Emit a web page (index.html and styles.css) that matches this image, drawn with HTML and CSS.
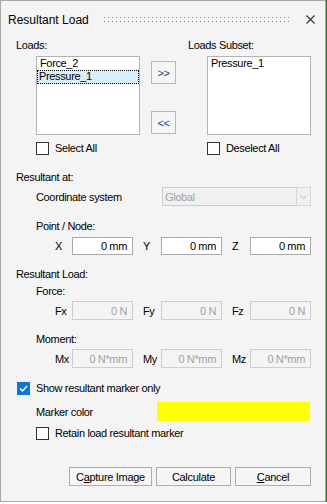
FILE: index.html
```html
<!DOCTYPE html>
<html>
<head>
<meta charset="utf-8">
<link rel="stylesheet" href="styles.css">
</head>
<body>
<div class="window">
  <div class="titlebar">
    <span class="title">Resultant Load</span>
    <svg class="grip" width="188" height="5" viewBox="0 0 188 5">
      <defs><pattern id="dots" width="4" height="4" patternUnits="userSpaceOnUse"><rect width="1" height="1" fill="#8c8c8c"/></pattern></defs>
      <rect width="188" height="5" fill="url(#dots)"/>
    </svg>
    <svg class="close" width="9" height="9" viewBox="0 0 9 9">
      <path d="M0.5 0.5 L8.5 8.5 M8.5 0.5 L0.5 8.5" stroke="#333" stroke-width="1.1" fill="none"/>
    </svg>
  </div>

  <div class="loads">
    <div class="col col-left">
      <div class="lbl">Loads:</div>
      <div class="listbox">
        <div class="item">Force_2</div>
        <div class="item selected">Pressure_1</div>
      </div>
      <div class="check-row">
        <span class="checkbox"></span><span>Select All</span>
      </div>
    </div>
    <div class="col col-mid">
      <div class="btn small btn-add">&gt;&gt;</div>
      <div class="btn small btn-remove">&lt;&lt;</div>
    </div>
    <div class="col col-right">
      <div class="lbl">Loads Subset:</div>
      <div class="listbox">
        <div class="item">Pressure_1</div>
      </div>
      <div class="check-row">
        <span class="checkbox"></span><span>Deselect All</span>
      </div>
    </div>
  </div>

  <div class="lbl row-label sec-resultant">Resultant at:</div>
  <div class="row-coord">
    <span class="coord-label">Coordinate system</span>
    <div class="combo">
      <span class="combo-text">Global</span>
      <span class="combo-btn">
        <svg width="7" height="4" viewBox="0 0 7 4"><path d="M0.5 0.5 L3.5 3.5 L6.5 0.5" stroke="#b5b5b5" stroke-width="1" fill="none"/></svg>
      </span>
    </div>
  </div>

  <div class="lbl sub-label sec-point">Point / Node:</div>
  <div class="xyz-row xyz-point">
    <span class="ax">X</span><span class="field">0 mm</span>
    <span class="ax ax-gap">Y</span><span class="field">0 mm</span>
    <span class="ax ax-gap">Z</span><span class="field">0 mm</span>
  </div>

  <div class="lbl row-label sec-load">Resultant Load:</div>
  <div class="lbl sub-label sec-force">Force:</div>
  <div class="xyz-row xyz-dis">
    <span class="ax">Fx</span><span class="field disabled">0 N</span>
    <span class="ax ax-gap">Fy</span><span class="field disabled">0 N</span>
    <span class="ax ax-gap">Fz</span><span class="field disabled">0 N</span>
  </div>
  <div class="lbl sub-label sec-moment">Moment:</div>
  <div class="xyz-row xyz-dis">
    <span class="ax">Mx</span><span class="field disabled">0 N*mm</span>
    <span class="ax ax-gap">My</span><span class="field disabled">0 N*mm</span>
    <span class="ax ax-gap">Mz</span><span class="field disabled">0 N*mm</span>
  </div>

  <div class="check-row show-row">
    <span class="checkbox checked">
      <svg width="11" height="11" viewBox="0 0 11 11"><path d="M2 5.5 L4.5 8 L9 3" stroke="#fff" stroke-width="1.4" fill="none"/></svg>
    </span>
    <span>Show resultant marker only</span>
  </div>
  <div class="marker-row">
    <span class="marker-label">Marker color</span>
    <span class="swatch"></span>
  </div>
  <div class="check-row retain-row">
    <span class="checkbox"></span><span>Retain load resultant marker</span>
  </div>

  <div class="actions">
    <div class="btn action btn-capture">C<u>a</u>pture Image</div>
    <div class="btn action btn-calc">Calculate</div>
    <div class="btn action btn-cancel"><u>C</u>ancel</div>
  </div>
</div>
</body>
</html>
```

FILE: styles.css
```css
html, body {
  margin: 0;
  padding: 0;
  background: #ffffff;
}

body {
  font-family: "Liberation Sans", Arial, sans-serif;
  font-size: 11px;
  letter-spacing: -0.35px;
  color: #000;
}

.window {
  box-sizing: border-box;
  width: 326px;
  height: 502px;
  border: 1px solid #a8a8a8;
  background: #f4f4f4;
  box-shadow: 1px 0 0 #2f6e33, 8px 2px 0 #a9a9a9;
  display: flex;
  flex-direction: column;
}

/* title bar */
.titlebar {
  height: 37px;
  flex: none;
  display: flex;
  align-items: center;
  padding: 0 10px 0 7px;
}
.title {
  font-size: 12px;
  letter-spacing: 0;
  line-height: 14px;
}
.grip {
  margin-left: auto;
  display: block;
  margin-top: -1px;
}
.close {
  display: block;
  margin-left: 14px;
  margin-top: -1px;
}

.lbl {
  height: 14px;
  line-height: 14px;
  white-space: nowrap;
}

/* loads section */
.loads {
  display: flex;
  padding-left: 15px;
  flex: none;
}
.col {
  display: flex;
  flex-direction: column;
}
.col-left {
  width: 124px;
}
.col-mid {
  width: 25px;
  margin-left: 11px;
}
.col-right {
  width: 123px;
  margin-left: 12px;
}
.listbox {
  box-sizing: border-box;
  width: 104px;
  height: 79px;
  margin-top: 4px;
  margin-left: 20px;
  background: #fff;
  border: 1px solid #b4b4b4;
  padding-top: 0;
}
.col-right .listbox {
  margin-left: 19px;
}
.item {
  height: 13px;
  line-height: 13px;
  padding-left: 3px;
  white-space: nowrap;
}
.item.selected {
  box-sizing: border-box;
  height: 14px;
  background: #d8eefb;
  outline: 1px dotted #000;
  outline-offset: -1px;
  line-height: 13px;
  padding-left: 2px;
  margin: 0;
}
.col-left .check-row,
.col-right .check-row {
  margin-top: 7px;
  margin-left: 20px;
}
.col-right .check-row {
  margin-left: 19px;
}

.btn {
  box-sizing: border-box;
  border: 1px solid #b8b8b8;
  background: #f5f5f5;
  display: flex;
  align-items: center;
  justify-content: center;
  white-space: nowrap;
}
.btn.small {
  width: 25px;
  height: 23px;
  font-size: 11px;
  letter-spacing: -0.5px;
  color: #1a3f8a;
}
.btn-add {
  margin-top: 23px;
}
.btn-remove {
  margin-top: 27px;
}

/* checkbox rows */
.check-row {
  display: flex;
  align-items: center;
  height: 13px;
  line-height: 13px;
  white-space: nowrap;
}
.checkbox {
  box-sizing: border-box;
  width: 13px;
  height: 13px;
  border: 1px solid #333;
  background: #fff;
  margin-right: 6px;
  flex: none;
  display: flex;
  align-items: center;
  justify-content: center;
}
.checkbox.checked {
  background: #0a78d4;
  border-color: #0a78d4;
  margin-right: 6px;
}

/* section labels */
.row-label {
  padding-left: 15px;
}
.sub-label {
  padding-left: 35px;
}
.sec-resultant {
  margin-top: 15px;
}
.row-coord {
  display: flex;
  align-items: center;
  height: 19px;
  margin-top: 3px;
  padding-left: 35px;
}
.coord-label {
  width: 126px;
  white-space: nowrap;
}
.combo {
  box-sizing: border-box;
  width: 149px;
  height: 19px;
  border: 1px solid #cccccc;
  background: #f0f0f0;
  display: flex;
  align-items: center;
}
.combo-text {
  color: #a2a2a2;
  padding-left: 2px;
  flex: 1;
}
.combo-btn {
  box-sizing: border-box;
  width: 15px;
  height: 19px;
  margin: -1px -1px -1px 0;
  border: 1px solid #d6d6d6;
  display: flex;
  align-items: center;
  justify-content: center;
}

.sec-point {
  margin-top: 13px;
}
.xyz-row {
  display: flex;
  align-items: center;
  padding-left: 54px;
  margin-top: 3px;
  height: 19px;
}
.xyz-point {
  margin-top: 4px;
  height: 18px;
}
.ax {
  width: 17px;
  flex: none;
  white-space: nowrap;
}
.ax-gap {
  width: 18px;
  margin-left: 10px;
}
.field {
  box-sizing: border-box;
  width: 61px;
  height: 100%;
  border: 1px solid #a9a9a9;
  background: #fff;
  display: flex;
  align-items: center;
  justify-content: flex-end;
  padding-right: 5px;
  white-space: nowrap;
  flex: none;
}
.field.disabled {
  border-color: #cdcdcd;
  background: #f4f4f4;
  color: #a0a0a0;
}

.sec-load {
  margin-top: 12px;
}
.sec-force {
  margin-top: 3px;
}
.sec-moment {
  margin-top: 12px;
}

.show-row {
  margin-top: 14px;
  padding-left: 16px;
}
.show-row .checkbox {
  margin-right: 6px;
}
.marker-row {
  display: flex;
  align-items: center;
  height: 19px;
  margin-top: 7px;
  padding-left: 35px;
}
.marker-label {
  width: 121px;
  white-space: nowrap;
}
.swatch {
  width: 153px;
  height: 19px;
  background: #ffff00;
}
.retain-row {
  margin-top: 6px;
  padding-left: 35px;
}

.actions {
  display: flex;
  justify-content: flex-end;
  gap: 4px;
  margin-top: 27px;
  padding-right: 14px;
}
.btn.action {
  height: 19px;
  font-size: 11px;
  letter-spacing: -0.3px;
  border-color: #adadad;
}
.btn-capture {
  width: 83px;
}
.btn-calc {
  width: 75px;
}
.btn-cancel {
  width: 76px;
}
```
